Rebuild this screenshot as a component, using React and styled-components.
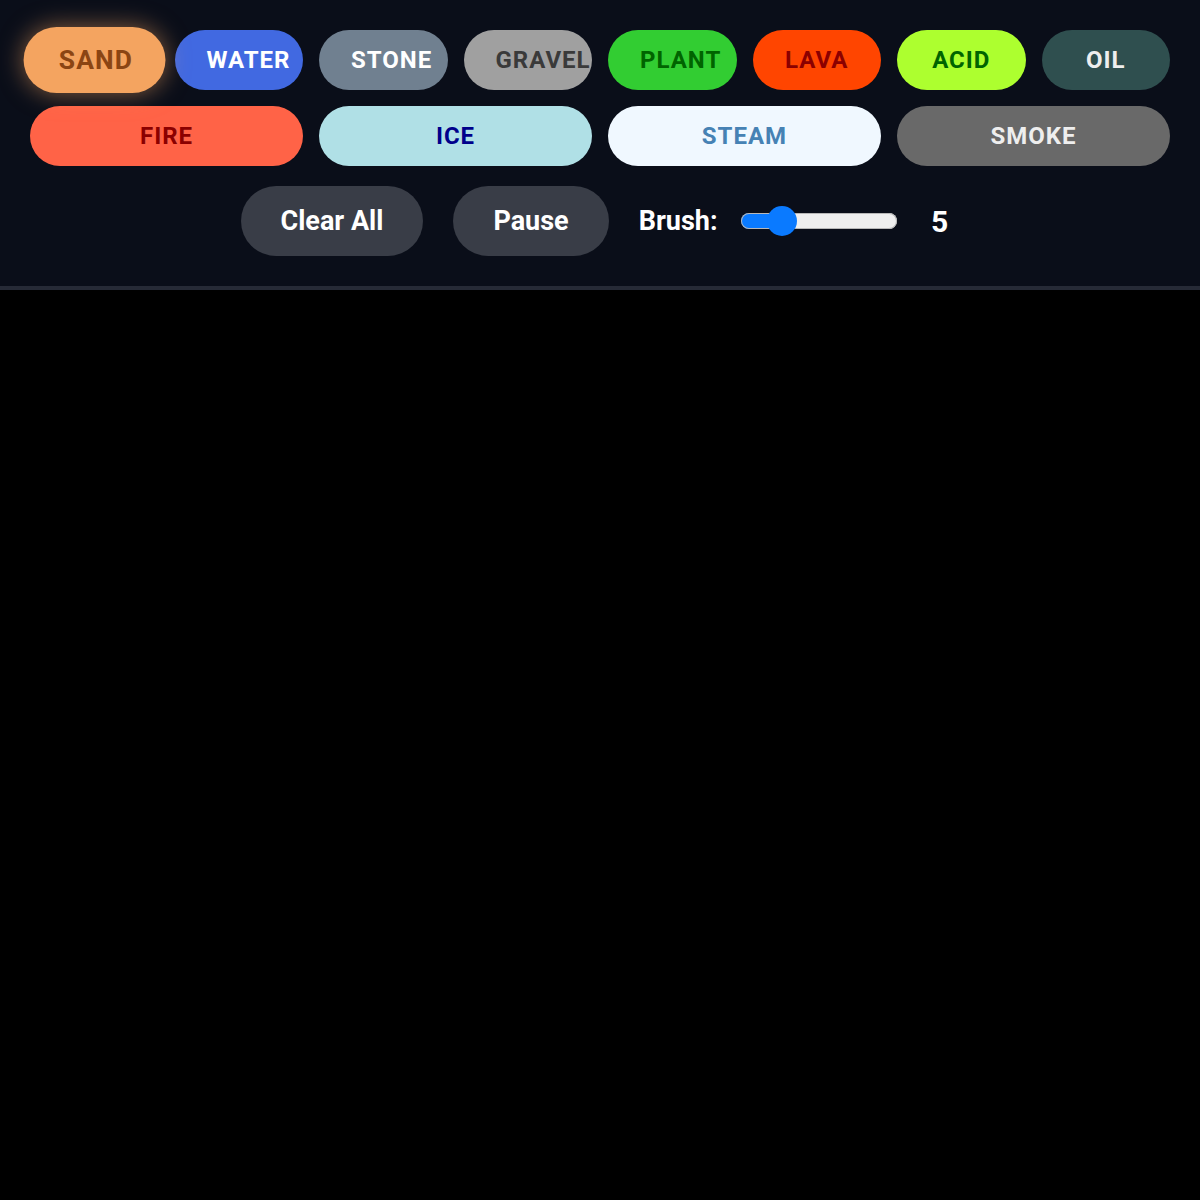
import React, { useState } from "react";
import styled, { createGlobalStyle, css } from "styled-components";

const GlobalStyle = createGlobalStyle`
	html, body {
		margin: 0;
		padding: 0;
		background: #000;
		font-family: Roboto, "Liberation Sans", sans-serif;
	}
`;

const ELEMENTS = [
	{ name: "SAND", bg: "#f4a460", fg: "#8b4513", glow: "rgba(244, 164, 96, 0.55)" },
	{ name: "WATER", bg: "#4169e1", fg: "#ffffff" },
	{ name: "STONE", bg: "#708090", fg: "#ffffff" },
	{ name: "GRAVEL", bg: "#a0a0a0", fg: "#3a3a3a" },
	{ name: "PLANT", bg: "#32cd32", fg: "#006400" },
	{ name: "LAVA", bg: "#ff4500", fg: "#8b0000" },
	{ name: "ACID", bg: "#adff2f", fg: "#006400" },
	{ name: "OIL", bg: "#2f4f4f", fg: "#eeeeee" },
	{ name: "FIRE", bg: "#ff6347", fg: "#8b0000", wide: true },
	{ name: "ICE", bg: "#b0e0e6", fg: "#00008b", wide: true },
	{ name: "STEAM", bg: "#f0f8ff", fg: "#4682b4", wide: true },
	{ name: "SMOKE", bg: "#696969", fg: "#eeeeee", wide: true },
];

const SLIDER_W = 156;
const THUMB = 30;

const Toolbar = styled.header`
	background: #0a0e19;
	padding: 30px 30px;
	border-bottom: 4px solid #262a36;
	display: flex;
	flex-direction: column;
	gap: 20px;
`;

const ElementGrid = styled.div`
	display: grid;
	grid-template-columns: repeat(8, minmax(0, 1fr));
	gap: 16px;
`;

const ElementButton = styled.button`
	grid-column: span ${(p) => (p.$wide ? 2 : 1)};
	min-width: 0;
	height: 60px;
	padding: 0 32px;
	border: none;
	border-radius: 30px;
	background: ${(p) => p.$bg};
	color: ${(p) => p.$fg};
	font-family: Roboto, "Liberation Sans", sans-serif;
	font-size: 24px;
	font-weight: 700;
	letter-spacing: 1px;
	text-align: center;
	white-space: nowrap;
	cursor: pointer;
	transition: transform 0.15s;

	${(p) =>
		p.$active &&
		css`
			transform: scale(1.1);
			box-shadow: 0 0 22px ${p.$glow};
		`}
`;

const Controls = styled.div`
	display: flex;
	justify-content: center;
	align-items: center;
	gap: 30px;
`;

const ActionButton = styled.button`
	height: 70px;
	padding: 0 40px;
	border: none;
	border-radius: 35px;
	background: #393d47;
	color: #fff;
	font-family: Roboto, "Liberation Sans", sans-serif;
	font-size: 27px;
	font-weight: 700;
	cursor: pointer;
`;

const BrushGroup = styled.label`
	display: flex;
	align-items: center;
	gap: 23px;
	color: #fff;
	font-size: 27px;
	font-weight: 700;
`;

const Slider = styled.input`
	-webkit-appearance: none;
	appearance: none;
	width: ${SLIDER_W}px;
	height: 16px;
	margin: 0;
	border-radius: 8px;
	box-shadow: inset 0 0 0 1px #b8b8b8;
	background: linear-gradient(
		to right,
		#0a7aff 0,
		#0a7aff ${(p) => p.$fill}%,
		#efefef ${(p) => p.$fill}%
	);
	outline: none;

	&::-webkit-slider-thumb {
		-webkit-appearance: none;
		width: ${THUMB}px;
		height: ${THUMB}px;
		border-radius: 50%;
		background: #0a7aff;
		border: none;
		cursor: pointer;
	}
`;

const BrushValue = styled.span`
	width: 40px;
	text-align: center;
	font-size: 30px;
`;

const Stage = styled.canvas`
	display: block;
	width: 100%;
	height: 910px;
	background: #000;
`;

export default function App() {
	const [selected, setSelected] = useState("SAND");
	const [paused, setPaused] = useState(false);
	const [brush, setBrush] = useState(5);
	const min = 1;
	const max = 20;
	const ratio = (brush - min) / (max - min);
	const fill = ((THUMB / 2 + ratio * (SLIDER_W - THUMB)) / SLIDER_W) * 100;

	return (
		<>
			<GlobalStyle />
			<Toolbar>
				<ElementGrid>
					{ELEMENTS.map((el) => (
						<ElementButton
							key={el.name}
							$bg={el.bg}
							$fg={el.fg}
							$glow={el.glow || el.bg}
							$wide={el.wide}
							$active={selected === el.name}
							onClick={() => setSelected(el.name)}
						>
							{el.name}
						</ElementButton>
					))}
				</ElementGrid>
				<Controls>
					<ActionButton>Clear All</ActionButton>
					<ActionButton onClick={() => setPaused(!paused)}>
						{paused ? "Resume" : "Pause"}
					</ActionButton>
					<BrushGroup>
						Brush:
						<Slider
							type="range"
							min={min}
							max={max}
							value={brush}
							$fill={fill}
							onChange={(e) => setBrush(Number(e.target.value))}
						/>
						<BrushValue>{brush}</BrushValue>
					</BrushGroup>
				</Controls>
			</Toolbar>
			<Stage />
		</>
	);
}
